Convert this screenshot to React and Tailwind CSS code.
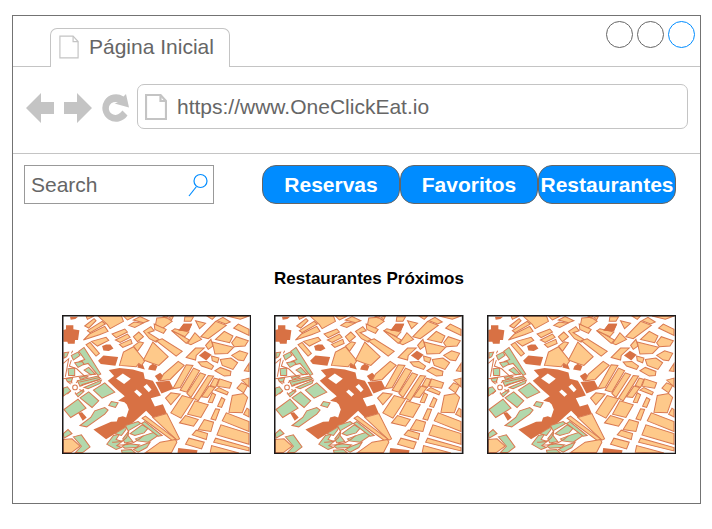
import React from "react";

const LANDMARKS = [
  "22,60 30,58 30,46 52,46 52,58 70,61 66,90 57,90 56,101 36,101 34,95 22,95",
  "138,108 150,103 163,103 172,115 158,123 142,121",
  "126,152 142,136 186,141 178,167 134,162",
  "42,20 66,20 58,27 44,29",
  "244,172 246,160 258,158 266,178",
  "276,178 280,168 290,161 304,168 298,182",
  "298,216 340,212 352,236 316,250",
  "296,198 312,188 322,198 308,214",
  "366,62 382,41 408,41 398,64",
  "428,136 446,122 466,134 450,151",
  "366,413 424,420 422,428 364,428",
  "66,308 78,306 92,322 80,332",
  "158,180 190,174 230,178 262,187 266,206 290,212 302,232 314,256 284,264 296,289 320,282 332,310 290,322 270,302 232,336 150,387 112,358 165,335 182,334 186,322 200,318 210,322 218,298 212,283 205,276 186,272 206,258 180,236 155,212 174,198",
];

const BUILDINGS = [
  "90,18 114,18 94,28",
  "86,48 114,26 120,32 98,54",
  "94,62 138,34 148,42 102,68",
  "82,90 100,72 146,49 156,64 130,74",
  "126,18 196,18 202,34 162,56 154,44",
  "202,18 238,18 214,30",
  "218,46 234,36 260,40 236,52",
  "232,30 252,20 278,32 262,38",
  "168,72 206,57 214,66 180,83",
  "178,90 214,72 222,82 192,97",
  "190,103 224,88 228,100 200,112",
  "232,80 248,66 262,80 244,95",
  "262,64 284,50 294,62 276,68 308,88 300,96 280,86",
  "298,44 318,56 348,34 330,22 302,24",
  "232,108 250,95 262,98 244,124",
  "90,104 102,97 130,130 120,138",
  "106,94 150,82 158,91 124,108",
  "190,166 202,126 232,110 266,152 256,166 248,160 240,170",
  "262,150 290,96 336,140 308,166 290,160",
  "300,92 318,86 378,124 360,138",
  "320,18 336,18 330,24",
  "294,42 330,58 322,70 296,58",
  "346,62 364,70 400,90 390,100",
  "338,22 352,18 346,30",
  "386,20 412,20 404,34 384,34",
  "394,100 416,68 436,88 404,104",
  "348,62 356,56 398,66 386,80",
  "418,32 448,40 430,56",
  "434,80 478,34 510,46 456,86",
  "452,18 478,18 468,28",
  "482,32 500,22 522,36 508,42",
  "512,18 578,18 552,28",
  "532,54 546,42 578,58 578,76",
  "478,88 504,64 530,78 520,98",
  "526,98 540,80 576,92 566,108 534,110",
  "448,106 464,88 470,108 456,118",
  "390,142 418,114 444,114 420,136 418,150",
  "468,96 532,112 514,130 476,132",
  "492,148 524,144 544,158 530,178 498,166",
  "526,136 550,122 574,130 562,152 546,150",
  "426,156 452,154 472,168 466,178 436,168",
  "466,138 488,144 484,158 468,152",
  "476,182 492,172 524,184 522,196 504,198",
  "564,182 578,160 578,184",
  "556,210 578,204 578,230",
  "312,212 322,192 366,154 384,166 342,208",
  "350,236 390,164 410,166 372,232",
  "372,240 412,174 430,182 392,246",
  "392,250 432,188 448,194 404,262",
  "412,264 456,196 472,198 426,272",
  "436,260 458,228 476,232 454,262",
  "462,226 474,204 488,208 478,232",
  "482,228 490,206 526,218 520,234",
  "476,240 488,232 516,246 512,254",
  "328,264 344,248 372,252 344,284",
  "344,308 378,256 412,266 374,324",
  "394,312 416,272 456,284 434,322",
  "370,338 388,316 426,328 412,348",
  "456,276 468,248 478,254 468,278",
  "484,288 496,262 506,268 496,292",
  "518,306 528,256 562,250 574,262 558,308",
  "464,326 478,296 490,298 478,330",
  "498,332 510,308 578,334 578,364",
  "482,374 494,344 578,370 578,402",
  "472,396 478,384 578,412 578,422",
  "462,426 466,406 548,428",
  "426,358 444,328 472,336 464,364",
  "408,374 420,360 454,370 450,388",
  "388,402 398,384 444,396 436,416",
  "542,234 556,218 574,226 562,248",
  "562,312 572,294 578,298 578,320",
  "290,322 332,310 370,386 362,390",
  "258,324 268,318 358,386 350,392",
  "268,427 312,396 358,388 362,396 346,427",
  "22,388 48,386 72,408 46,427 22,427",
];

const PARKS = [
  "68,124 84,112 134,192 126,196 96,160 82,164 70,154 86,148",
  "46,136 66,126 72,136 52,150",
  "24,128 38,126 32,140 24,144",
  "56,158 78,154 84,162 66,172",
  "36,176 56,174 56,196 38,196",
  "84,180 98,172 118,192 104,194",
  "64,212 126,198 134,206 72,228",
  "70,202 90,196 96,200 74,208",
  "84,232 136,210 132,220 96,236",
  "22,234 34,230 44,242 22,258",
  "30,206 50,202 46,216 34,214",
  "60,252 82,238 84,244 66,260",
  "24,298 66,267 90,294 44,322",
  "72,263 98,245 128,272 108,292",
  "112,240 146,218 176,246 138,264",
  "72,346 104,322 116,302 146,292 156,300 146,312 92,350",
  "158,286 166,274 186,278 178,292",
  "22,370 36,358 48,370 24,384",
  "52,380 76,374 102,410 80,427 58,427 76,408",
  "152,402 172,376 190,372 180,388 198,394 182,406 196,412 180,418",
  "176,370 214,348 208,360 196,376",
  "208,346 246,334 254,340 216,362",
  "200,386 218,362 216,376 230,394 206,398",
  "222,370 258,344 276,354 264,368 236,376",
  "238,386 270,374 294,366 306,376 276,396 244,392",
  "198,408 212,400 250,404 240,412 206,414",
  "250,408 282,396 272,412 246,426 232,418",
  "196,420 226,418 238,428 198,428",
  "256,340 266,334 318,376 306,378",
];

const OPENINGS = [
  "180,205 200,190 224,206 204,222",
  "234,245 242,238 258,252 250,260",
  "262,230 272,222 286,238 278,246",
];

function CityMap({ label }) {
  return (
    <svg
      viewBox="18 15 567 417"
      role="img"
      aria-label={label}
      className="block w-full"
    >
      <rect x="18" y="15" width="567" height="417" fill="#fff" />
      {LANDMARKS.map((p) => (
        <polygon key={p} points={p} fill="#d87144" />
      ))}
      {OPENINGS.map((p) => (
        <polygon key={p} points={p} fill="#fff" />
      ))}
      <g stroke="#d97950" strokeWidth="3">
        {BUILDINGS.map((p) => (
          <polygon key={p} points={p} fill="#fec98a" />
        ))}
        {PARKS.map((p) => (
          <polygon key={p} points={p} fill="#b2d8ac" />
        ))}
      </g>
      <polygon points="366,62 382,41 408,41 398,64" fill="#d87144" />
      <g fill="none" stroke="#d97950" strokeWidth="3">
        <path d="M22 160 38 146 28 200 M46 150 40 168 62 176 88 200 M22 206 60 200 120 192 M70 216 130 202 M76 224 132 208 M46 130 50 122" />
        <path d="M168 396Q210 398 216 370M186 404Q230 408 262 376" />
        <circle cx="57" cy="232" r="7" />
        <path d="M44 222 34 214 M48 220 46 210 M60 218 66 212 M70 228 80 226 M70 238 82 244 M58 246 58 252 M44 242 34 252" />
      </g>
      <rect x="20" y="17" width="563" height="413" fill="none" stroke="#1c1a1a" strokeWidth="5" />
    </svg>
  );
}

function PageIcon({ className, strokeWidth }) {
  return (
    <svg
      viewBox="0 0 22 26"
      className={className}
      fill="none"
      stroke="#c4c4c4"
      strokeWidth={strokeWidth}
      aria-hidden="true"
    >
      <path d="M1 1H15.500L21 7V25H1Z" />
      <path d="M15.500 1V7H21" />
    </svg>
  );
}

function ToolButton({ label, children }) {
  return (
    <button type="button" aria-label={label} className="h-8 w-7 shrink-0">
      <svg viewBox="0 0 28 32" className="block h-8 w-7" fill="#c4c4c4" aria-hidden="true">
        {children}
      </svg>
    </button>
  );
}

const CIRCLES = [
  { label: "Minimizar", color: "border-[#666666]" },
  { label: "Maximizar", color: "border-[#666666]" },
  { label: "Fechar", color: "border-[#008cff]" },
];

const LINKS = ["Reservas", "Favoritos", "Restaurantes"];

export default function App() {
  return (
    <div className="bg-white pt-[15px] pr-[11px] pb-6 pl-3 font-['Liberation_Sans',Arial,sans-serif] text-[21px] leading-6 text-[#666666]">
      <div className="border border-[#737373] pb-[49px]">
        <header className="flex h-[51px]">
          <div className="w-[37px] shrink-0 border-b border-[#c4c4c4]" />
          <div className="mt-3 flex items-center gap-[10px] rounded-t-[7px] border border-b-0 border-[#c4c4c4] pr-[15px] pb-0.5 pl-2">
            <PageIcon className="h-6 w-5" strokeWidth={1.3} />
            <span>Página Inicial</span>
          </div>
          <div className="flex flex-1 items-start justify-end gap-1 border-b border-[#c4c4c4] pt-[5px] pr-[5px]">
            {CIRCLES.map((c) => (
              <button
                key={c.label}
                type="button"
                aria-label={c.label}
                className={`size-[27px] rounded-full border ${c.color}`}
              />
            ))}
          </div>
        </header>

        <div className="flex items-center gap-[10px] border-b border-[#c4c4c4] pt-[17px] pr-3 pb-6 pl-[13px]">
          <ToolButton label="Voltar">
            <path d="M0 17 15 2V11H28V23H15V32Z" />
          </ToolButton>
          <ToolButton label="Avançar">
            <path d="M28 17 13 2V11H0V23H13V32Z" />
          </ToolButton>
          <ToolButton label="Recarregar">
            <path d="M24 3 27 16.500 12.500 12.500 16 11.500A6.500 6.500 0 1 0 18 22L20.500 19.500 25.500 24.500A13.700 13.700 0 1 1 21.500 5.500Z" />
          </ToolButton>
          <div className="-ml-[3px] flex h-[45px] min-w-0 flex-1 items-center gap-[10px] rounded-[7px] border border-[#c4c4c4] pl-[7px]">
            <PageIcon className="h-[26px] w-[22px] shrink-0" strokeWidth={2.2} />
            <input
              type="text"
              aria-label="Endereço"
              defaultValue="https://www.OneClickEat.io"
              className="min-w-0 flex-1 outline-none"
            />
          </div>
        </div>

        <div className="flex items-center justify-between pt-[11px] pr-6 pl-[11px]">
          <div className="flex h-[39px] w-[190px] items-center border border-[#999999] pr-[5px] pl-[6px]">
            <input
              type="search"
              aria-label="Search"
              placeholder="Search"
              className="min-w-0 flex-1 outline-none placeholder:text-[#666666] placeholder:opacity-100"
            />
            <svg viewBox="0 0 20 24" className="h-6 w-5 shrink-0" fill="none" stroke="#008cff" strokeWidth="1.2" aria-hidden="true">
              <circle cx="12.500" cy="8" r="6.500" />
              <path d="M8.500 13.500 1 23" />
            </svg>
          </div>
          <nav className="flex font-bold text-white">
            {LINKS.map((name) => (
              <button
                key={name}
                type="button"
                className="h-[39px] w-[138px] rounded-[14px] border border-[#666666] bg-[#008cff]"
              >
                {name}
              </button>
            ))}
          </nav>
        </div>

        <main className="pt-[63px] pr-6 pl-[49px]">
          <h1 className="text-center text-[17px] font-bold text-black">Restaurantes Próximos</h1>
          <div className="mt-6 grid grid-cols-3 gap-[23px]">
            <CityMap label="Mapa do primeiro restaurante" />
            <CityMap label="Mapa do segundo restaurante" />
            <CityMap label="Mapa do terceiro restaurante" />
          </div>
        </main>
      </div>
    </div>
  );
}
